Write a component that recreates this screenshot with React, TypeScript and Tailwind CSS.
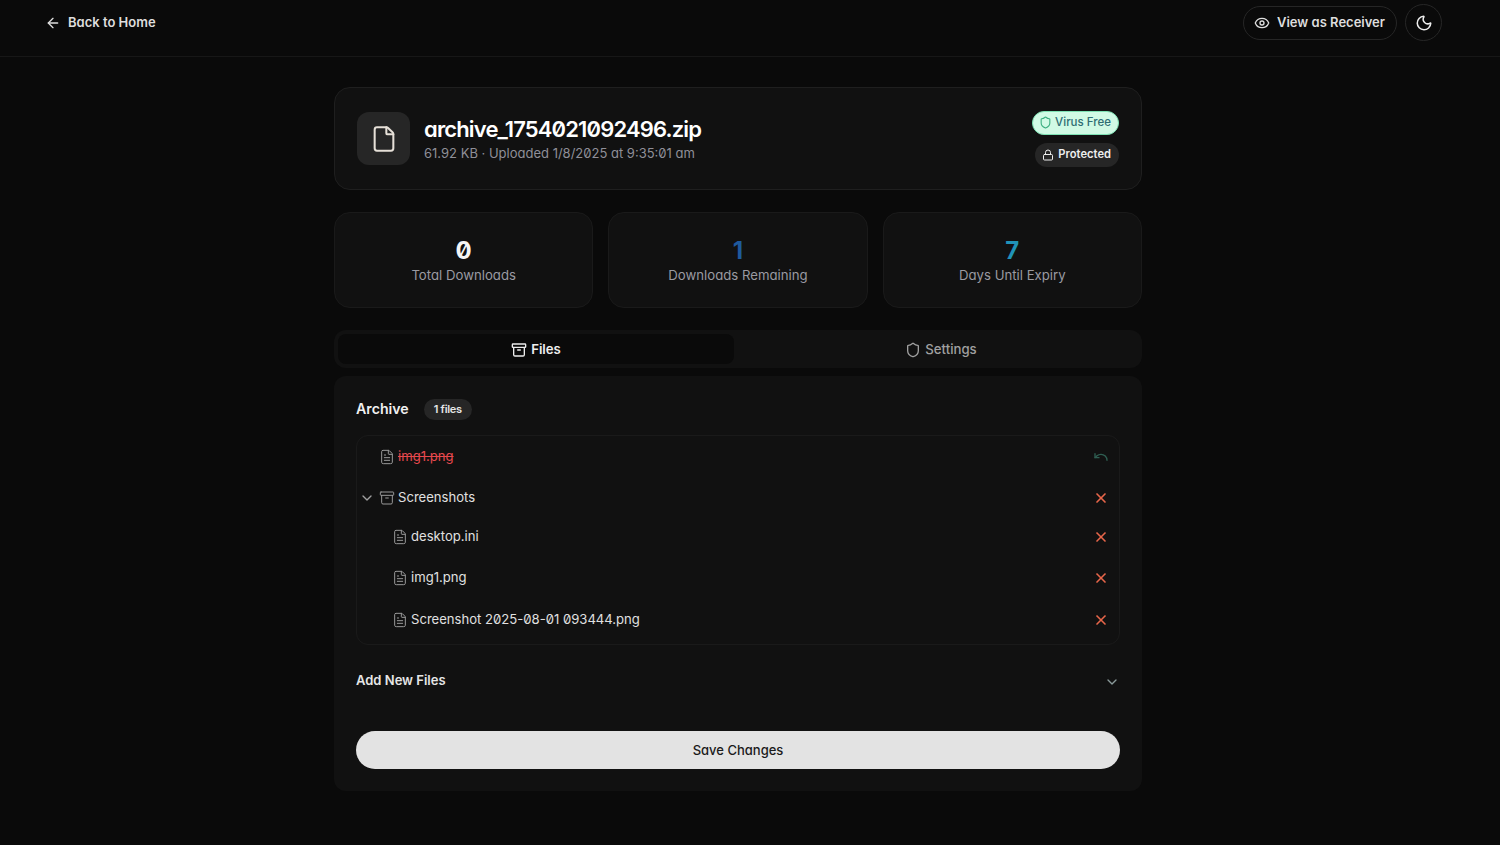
import { ArrowLeft, ChevronDown, Eye, File, FileText, Archive, Lock, Moon, Shield, Undo, X } from "lucide-react";

function StatCard({ value, label, color }: { value: string; label: string; color: string }) {
  return (
    <div className="flex h-24 flex-col items-center rounded-2xl border border-[#1a1a1a] bg-[#111111] pt-[25px]">
      <div className={`text-2xl leading-[26px] font-bold ${color}`}>{value}</div>
      <div className="mt-[1px] text-[13.2px] leading-5 text-[#9a9aa2]">{label}</div>
    </div>
  );
}

function FileRow({ name, indent, deleted, className = "h-[41px]" }: { name: string; indent?: boolean; deleted?: boolean; className?: string }) {
  return (
    <div className={`flex items-center pr-[10px] ${className} ${indent ? "pl-[37px]" : "pl-6"}`}>
      <FileText className="-ml-0.5 mr-[3px] h-4 w-4 text-[#9a9a9a]" strokeWidth={1.5} />
      <span className={`pt-px text-[13.1px] ${deleted ? "text-[#e5484d] line-through" : "text-[#e0e0e0]"}`}>{name}</span>
      {deleted ? (
        <Undo className="ml-auto h-4 w-4 text-[#2f5f52]" />
      ) : (
        <X className="ml-auto h-4 w-4 text-[#e8664a]" strokeWidth={2.5} />
      )}
    </div>
  );
}

export default function App() {
  return (
    <div className="min-h-[845px] bg-[#0a0a0a] font-['Inter',sans-serif] text-white [font-feature-settings:'cv11','zero']">
      <header className="flex h-[57px] items-start justify-between border-b border-[#171717] pt-[4px] pr-[58px] pl-[45px]">
        <div className="flex h-[37px] items-center gap-[7px] text-[13px] font-semibold text-[#dedede]">
          <ArrowLeft className="h-4 w-4" />
          Back to Home
        </div>
        <div className="flex items-center gap-2">
          <div className="flex h-[34px] w-[154px] items-center gap-[7px] rounded-full border border-[#262626] pl-[10px] text-[13px] font-semibold text-[#dedede]">
            <Eye className="h-4 w-4" />
            View as Receiver
          </div>
          <div className="flex h-[37px] w-[37px] items-center justify-center rounded-full border border-[#262626]">
            <Moon className="h-[18px] w-[18px] text-[#eeeeee]" />
          </div>
        </div>
      </header>

      <div className="pr-6">
        <main className="mx-auto flex w-[808px] flex-col pt-[30px]">
          <section className="flex h-[103px] items-center rounded-2xl border border-[#1f1f1f] bg-[#111111] pr-[22px] pl-[22px]">
            <div className="flex h-[53px] w-[53px] items-center justify-center rounded-xl bg-[#262626]">
              <File className="h-7 w-7 text-[#e6e0d8]" strokeWidth={1.75} />
            </div>
            <div className="ml-[14px]">
              <h1 className="-mt-px text-[22px] leading-7 font-semibold tracking-[-0.85px]">archive_1754021092496.zip</h1>
              <p className="mt-px text-[13px] leading-[18px] text-[#8f8f98]">61.92 KB · Uploaded 1/8/2025 at 9:35:01 am</p>
            </div>
            <div className="ml-auto flex flex-col items-end gap-2">
              <span className="flex h-6 items-center gap-[3px] rounded-full border border-[#7ee2b4] bg-[#d1fae5] pr-[7px] pl-[6px] text-[11.5px] font-medium text-[#2f6d73]">
                <Shield className="h-[13px] w-[13px] text-[#3bae80]" />
                Virus Free
              </span>
              <span className="flex h-6 items-center gap-1 rounded-full bg-[#262626] pr-2 pl-[7px] text-[11.2px] font-semibold text-[#eeeeee]">
                <Lock className="h-3 w-3" />
                Protected
              </span>
            </div>
          </section>

          <section className="mt-[22px] grid grid-cols-3 gap-[15px]">
            <StatCard value="0" label="Total Downloads" color="text-[#f5f5f5]" />
            <StatCard value="1" label="Downloads Remaining" color="text-[#1f5a9e]" />
            <StatCard value="7" label="Days Until Expiry" color="text-[#2093b8]" />
          </section>

          <nav className="mt-[22px] flex h-[38px] rounded-xl bg-[#111111] p-1 text-[13.2px] font-medium">
            <div className="flex w-[396px] items-center justify-center gap-1 rounded-lg bg-[#0a0a0a] pt-px font-semibold text-[#eeeeee]">
              <Archive className="h-4 w-4" />
              Files
            </div>
            <div className="ml-[10px] flex flex-1 items-center justify-center gap-1 pt-px text-[#a0a0a0]">
              <Shield className="h-4 w-4" />
              Settings
            </div>
          </nav>

          <section className="mt-2 h-[415px] rounded-xl bg-[#111111] px-[22px] pt-[22px]">
            <div className="flex h-[22px] items-center gap-[15px]">
              <h2 className="text-[14.2px] font-semibold text-[#f0f0f0]">Archive</h2>
              <span className="flex h-[21px] items-center rounded-full bg-[#262626] px-[10px] text-[11px] font-semibold tracking-[-0.3px] text-[#e6e6e6]">1 files</span>
            </div>

            <div className="mt-[15px] h-[210px] rounded-xl border border-[#1a1a1a]">
              <FileRow name="img1.png" deleted />
              <div className="flex h-[41px] items-center pr-[10px] pl-[2px]">
                <ChevronDown className="mr-[4px] h-4 w-4 text-[#a0a0a0]" />
                <Archive className="mr-[3px] h-4 w-4 text-[#9a9a9a]" strokeWidth={1.5} />
                <span className="pt-px text-[13.1px] text-[#e0e0e0]">Screenshots</span>
                <X className="ml-auto h-4 w-4 text-[#e8664a]" strokeWidth={2.5} />
              </div>
              <div className="-mt-0.5">
                <FileRow name="desktop.ini" indent />
                <FileRow name="img1.png" indent />
                <FileRow name="Screenshot 2025-08-01 093444.png" indent className="h-[43px]" />
              </div>
            </div>

            <div className="mt-[24px] flex h-[24px] items-center justify-between">
              <span className="text-[13px] font-semibold text-[#e6e6e6]">Add New Files</span>
              <ChevronDown className="mt-0.5 h-4 w-4 text-[#8a9a9a]" />
            </div>

            <button className="mt-[38px] h-[38px] w-full rounded-full bg-[#e3e3e3] pt-px text-[13px] font-medium text-[#1a1a1a]">
              Save Changes
            </button>
          </section>
        </main>
      </div>
    </div>
  );
}
